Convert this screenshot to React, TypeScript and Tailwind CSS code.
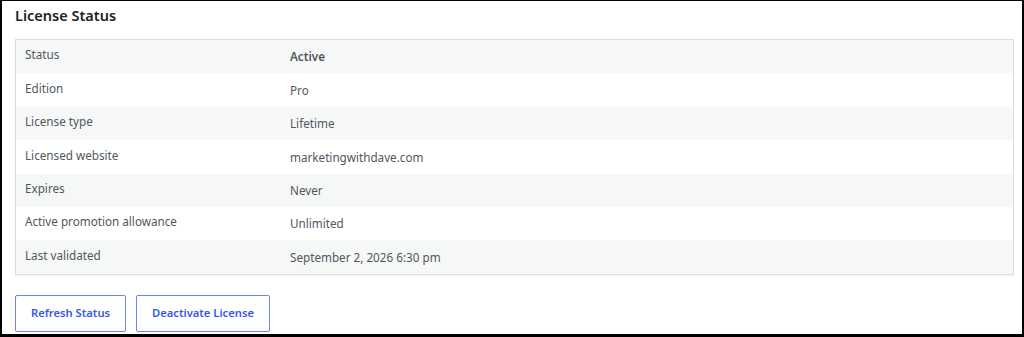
import React from 'react';

const rows: { label: string; value: string; strong?: boolean }[] = [
  { label: 'Status', value: 'Active', strong: true },
  { label: 'Edition', value: 'Pro' },
  { label: 'License type', value: 'Lifetime' },
  { label: 'Licensed website', value: 'marketingwithdave.com' },
  { label: 'Expires', value: 'Never' },
  { label: 'Active promotion allowance', value: 'Unlimited' },
  { label: 'Last validated', value: 'September 2, 2026 6:30 pm' },
];

const App = () => {
  return (
    <div
      className="w-[1024px] h-[337px] bg-white border-black border-l-2 border-t border-r-2 border-b-[3px] overflow-hidden"
      style={{ fontFamily: '"Noto Sans", "Open Sans", sans-serif' }}
    >
      <div className="pl-[13px] pr-[8px]">
        <h2 className="text-[14.5px] font-semibold text-[#1d2327] leading-5 pt-[4px] h-[38px]">
          License Status
        </h2>

        {/* status table */}
        <div className="border border-[#dcdcde] shadow-[0_1px_1px_rgba(0,0,0,0.04)]">
          {rows.map((row, i) => (
            <div
              key={row.label}
              className={`flex items-center h-[33.4px] ${i % 2 === 0 ? 'bg-[#f6f7f7]' : 'bg-white'}`}
            >
              <div className="w-[274px] pl-[9px] pb-[3px] text-[11.7px] text-[#50575e]">{row.label}</div>
              <div
                className={`pt-[1px] text-[11.7px] text-[#50575e] ${row.strong ? 'font-semibold text-[#3c434a]' : ''}`}
              >
                {row.value}
              </div>
            </div>
          ))}
        </div>

        <div className="flex gap-[10px] mt-[20px]">
          <button className="w-[111px] h-[37px] border border-[#6f83ef] rounded-[2px] text-[11.2px] font-semibold text-[#3858e9]">
            Refresh Status
          </button>
          <button className="w-[134px] h-[37px] border border-[#6f83ef] rounded-[2px] text-[11.2px] font-semibold text-[#3858e9]">
            Deactivate License
          </button>
        </div>
      </div>
    </div>
  );
};

export default App;
